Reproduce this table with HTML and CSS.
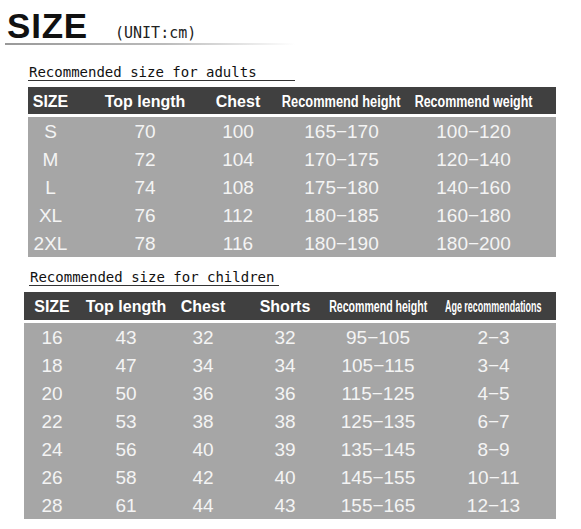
FILE: index.html
```html
<!DOCTYPE html>
<html lang="en">
<head>
<meta charset="utf-8">
<title>Size chart</title>
<link rel="stylesheet" href="styles.css">
</head>
<body>
<div class="title">
  <h1>SIZE</h1>
  <span class="unit">(UNIT:cm)</span>
</div>
<div class="title-rule"></div>

<p class="label label-adult">Recommended size for adults</p>
<div class="table adult">
  <div class="row head">
    <div>SIZE</div><div>Top length</div><div>Chest</div>
    <div><span class="nr nr-ah">Recommend height</span></div>
    <div><span class="nr nr-aw">Recommend weight</span></div>
  </div>
  <div class="body">
    <div class="row"><div>S</div><div>70</div><div>100</div><div>165−170</div><div>100−120</div></div>
    <div class="row"><div>M</div><div>72</div><div>104</div><div>170−175</div><div>120−140</div></div>
    <div class="row"><div>L</div><div>74</div><div>108</div><div>175−180</div><div>140−160</div></div>
    <div class="row"><div>XL</div><div>76</div><div>112</div><div>180−185</div><div>160−180</div></div>
    <div class="row"><div>2XL</div><div>78</div><div>116</div><div>180−190</div><div>180−200</div></div>
  </div>
</div>

<p class="label label-child">Recommended size for children</p>
<div class="table child">
  <div class="row head">
    <div>SIZE</div><div>Top length</div><div>Chest</div><div>Shorts</div>
    <div><span class="nr nr-ch">Recommend height</span></div>
    <div><span class="nr nr-ca">Age recommendations</span></div>
  </div>
  <div class="body">
    <div class="row"><div>16</div><div>43</div><div>32</div><div>32</div><div>95−105</div><div>2−3</div></div>
    <div class="row"><div>18</div><div>47</div><div>34</div><div>34</div><div>105−115</div><div>3−4</div></div>
    <div class="row"><div>20</div><div>50</div><div>36</div><div>36</div><div>115−125</div><div>4−5</div></div>
    <div class="row"><div>22</div><div>53</div><div>38</div><div>38</div><div>125−135</div><div>6−7</div></div>
    <div class="row"><div>24</div><div>56</div><div>40</div><div>39</div><div>135−145</div><div>8−9</div></div>
    <div class="row"><div>26</div><div>58</div><div>42</div><div>40</div><div>145−155</div><div>10−11</div></div>
    <div class="row"><div>28</div><div>61</div><div>44</div><div>43</div><div>155−165</div><div>12−13</div></div>
  </div>
</div>
</body>
</html>
```

FILE: styles.css
```css
body {
  margin: 0;
  background: #fff;
  font-family: "Liberation Sans", Arial, sans-serif;
  color: #111;
}

.title {
  display: flex;
  align-items: baseline;
  height: 35px;
  padding: 8px 0 0 7px;
}

.title h1 {
  margin: 0;
  font-size: 35px;
  line-height: 35px;
  font-weight: 700;
  letter-spacing: 0.8px;
  color: #111;
}

.unit {
  margin-left: 27px;
  font-family: "DejaVu Sans Mono", monospace;
  font-size: 15px;
  line-height: 1;
  color: #222;
}

.title-rule {
  margin-left: 5px;
  width: 290px;
  height: 2px;
  background: linear-gradient(to right, #999 0%, #bbb 55%, #fff 100%);
}

.label {
  margin: 19px 0 0 28px;
  width: 266px;
  padding-left: 1px;
  font-family: "DejaVu Sans Mono", monospace;
  font-size: 14px;
  line-height: 16px;
  border-bottom: 1px solid #333;
  color: #111;
}

.label-child {
  margin: 12px 0 0 29px;
  width: 249px;
}

.adult {
  margin: 6px 0 0 28px;
  width: 528px;
}

.child {
  margin: 6px 0 0 24px;
  width: 532px;
}

.row {
  display: grid;
}

.adult .row {
  grid-template-columns: 68px 96px 96px 118px 150px;
}

.child .row {
  grid-template-columns: 64px 76px 80px 86px 104px 122px;
}

.row > div {
  display: flex;
  justify-content: center;
  white-space: nowrap;
}

.head {
  background: #404040;
  color: #fff;
  font-weight: 700;
  font-size: 16px;
}

.adult .head {
  padding-top: 3px;
  line-height: 24px;
}

.child .head {
  padding-top: 2px;
  line-height: 26px;
}

.body {
  margin-top: 3px;
  background: #a6a6a6;
  color: #f4f4f4;
  font-size: 19px;
  line-height: 28px;
}

.body .row {
  padding-top: 1px;
  height: 27px;
}

.nr {
  display: inline-block;
}

.nr-ah { transform: scaleX(0.8); }
.nr-aw { transform: scaleX(0.78); }
.nr-ch { transform: scaleX(0.66); }
.nr-ca { transform: scaleX(0.56); }

/* column centring offsets */
.adult .row > div:nth-child(1) { padding-right: 23px; }
.adult .row > div:nth-child(2) { padding-left: 2px; }
.adult .row > div:nth-child(3) { padding-right: 4px; }
.adult .row > div:nth-child(4) { padding-right: 11px; }
.adult .row > div:nth-child(5) { padding-right: 15px; }

.child .row > div:nth-child(1) { padding-right: 8px; }
.child .row > div:nth-child(3) { padding-right: 2px; }
.child .row > div:nth-child(4) { padding-right: 4px; }
.child .row > div:nth-child(5) { padding-right: 8px; }
.child .row > div:nth-child(6) { padding-right: 3px; }
```
